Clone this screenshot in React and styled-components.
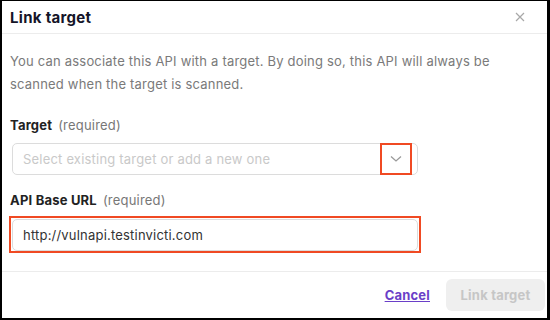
import React from 'react';
import styled, { createGlobalStyle } from 'styled-components';

const GlobalStyle = createGlobalStyle`
	html, body {
		margin: 0;
		padding: 0;
		background: #000;
	}
	* {
		box-sizing: border-box;
	}
`;

const Frame = styled.div`
	width: 550px;
	height: 320px;
	background: #000;
	padding: 1px 3px 2px 2px;
	font-family: Inter, Roboto, sans-serif;
	letter-spacing: 0.2px;
`;

const Dialog = styled.div`
	height: 100%;
	background: #fff;
	display: flex;
	flex-direction: column;
`;

const Header = styled.div`
	height: 33px;
	display: flex;
	align-items: center;
	justify-content: space-between;
	padding: 0 22px 0 8px;
	border-bottom: 1px solid #ececec;
`;

const Title = styled.h1`
	margin: 0;
	font-size: 15px;
	font-weight: 700;
	color: #141428;
	letter-spacing: 0.3px;
`;

const CloseButton = styled.button`
	border: 0;
	background: none;
	padding: 0;
	display: flex;
	color: #a8a8a8;
	cursor: pointer;
`;

const Body = styled.div`
	flex: 1;
	padding: 16px 8px 0 8px;
`;

const Description = styled.p`
	margin: 0 0 20px;
	font-size: 13px;
	line-height: 23px;
	color: #7a7a7a;
`;

const Field = styled.div`
	width: 408px;
	margin-bottom: ${(p) => p.$gap || 0}px;
`;

const Label = styled.div`
	font-size: 13px;
	line-height: 18px;
	font-weight: 700;
	color: #222;
	margin-bottom: ${(p) => p.$gap}px;
	span {
		font-weight: 400;
		color: #777;
		margin-left: 6px;
	}
`;

const Control = styled.div`
	position: relative;
	height: 32px;
	border: 1px solid #dcdcdc;
	border-radius: 5px;
	display: flex;
	align-items: center;
	padding-left: 10px;
	margin-left: 2px;
	font-size: 13px;
	color: ${(p) => (p.$placeholder ? '#c9c9c9' : '#333')};
`;

const ChevronBox = styled.div`
	position: absolute;
	top: -1px;
	bottom: -1px;
	right: 5px;
	width: 32px;
	display: flex;
	align-items: center;
	justify-content: center;
	color: #9a9a9a;
	border: 2px solid #f04a23;
`;

const Highlight = styled.div`
	position: absolute;
	inset: -4px -4px -3px -4px;
	border: 2px solid #f04a23;
	pointer-events: none;
`;

const Footer = styled.div`
	height: 47px;
	border-top: 1px solid #ececec;
	display: flex;
	align-items: center;
	justify-content: flex-end;
	gap: 16px;
	padding-right: 2px;
`;

const LinkButton = styled.a`
	font-size: 13px;
	font-weight: 700;
	color: #6a3fc8;
	text-decoration: underline;
	cursor: pointer;
`;

const PrimaryButton = styled.button`
	height: 32px;
	width: 99px;
	border: 0;
	border-radius: 6px;
	background: #efefef;
	color: #c6c6c6;
	font-family: inherit;
	letter-spacing: inherit;
	font-size: 13px;
	font-weight: 700;
`;

const App = () => {
	return (
		<>
			<GlobalStyle />
			<Frame>
				<Dialog>
					<Header>
						<Title>Link target</Title>
						<CloseButton aria-label='Close'>
							<svg width='10' height='10' viewBox='0 0 10 10'>
								<path
									d='M1 1L9 9M9 1L1 9'
									stroke='currentColor'
									strokeWidth='1.2'
								/>
							</svg>
						</CloseButton>
					</Header>
					<Body>
						<Description>
							You can associate this API with a target. By doing
							so, this API will always be scanned when the target
							is scanned.
						</Description>
						<Field $gap={16}>
							<Label $gap={9}>
								Target<span>(required)</span>
							</Label>
							<Control $placeholder>
								Select existing target or add a new one
								<ChevronBox>
									<svg width='12' height='8' viewBox='0 0 12 8'>
										<path
											d='M1 1.5L6 6L11 1.5'
											fill='none'
											stroke='currentColor'
											strokeWidth='1.3'
										/>
									</svg>
								</ChevronBox>
							</Control>
						</Field>
						<Field>
							<Label $gap={10}>
								API Base URL<span>(required)</span>
							</Label>
							<Control>
								http://vulnapi.testinvicti.com
								<Highlight />
							</Control>
						</Field>
					</Body>
					<Footer>
						<LinkButton>Cancel</LinkButton>
						<PrimaryButton disabled>Link target</PrimaryButton>
					</Footer>
				</Dialog>
			</Frame>
		</>
	);
};

export default App;
